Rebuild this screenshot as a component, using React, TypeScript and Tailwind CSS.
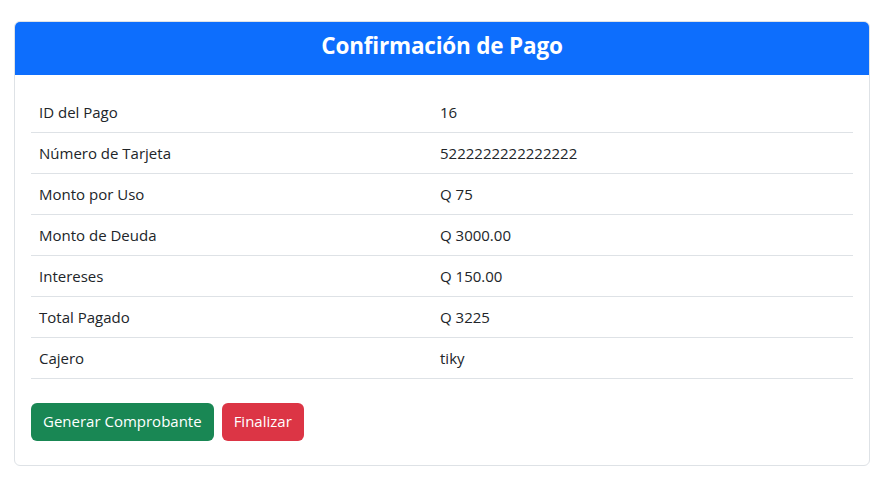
const rows: [string, string][] = [
  ['ID del Pago', '16'],
  ['Número de Tarjeta', '5222222222222222'],
  ['Monto por Uso', 'Q 75'],
  ['Monto de Deuda', 'Q 3000.00'],
  ['Intereses', 'Q 150.00'],
  ['Total Pagado', 'Q 3225'],
  ['Cajero', 'tiky'],
];

export default function App() {
  return (
    <div className="min-h-screen bg-white pl-[14px] pr-[16px] pt-[21px] font-['Open_Sans','Noto_Sans',sans-serif] text-[#212529]">
      <div className="rounded-[6px] border border-[#dee2e6] overflow-hidden">
        <div className="h-[53px] bg-[#0d6efd] flex items-center justify-center pb-[5px]">
          <h4 className="text-white text-[22.5px] font-bold tracking-[-0.2px]">Confirmación de Pago</h4>
        </div>
        <div className="px-4 pt-4 pb-6">
          <table className="w-full text-[15px] border-collapse">
            <tbody>
              {rows.map(([k, v]) => (
                <tr key={k} className="border-b border-[#dee2e6]">
                  <td className="w-[401px] px-2 pt-[2px] h-[41px] align-middle">{k}</td>
                  <td className="px-2 pt-[2px] h-[41px] align-middle">{v}</td>
                </tr>
              ))}
            </tbody>
          </table>
          <div className="mt-[24px] flex gap-2">
            <button className="h-[38px] px-3 rounded-[6px] bg-[#198754] text-white text-[15px]">Generar Comprobante</button>
            <button className="h-[38px] px-3 rounded-[6px] bg-[#dc3545] text-white text-[15px]">Finalizar</button>
          </div>
        </div>
      </div>
    </div>
  );
}
